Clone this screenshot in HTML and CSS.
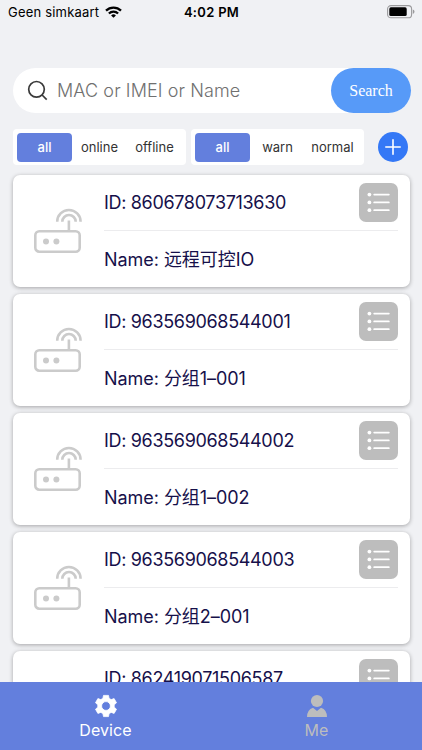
FILE: index.html
```html
<!DOCTYPE html>
<html lang="en">
<head>
    <meta charset="UTF-8">
    <meta name="viewport" content="width=device-width, initial-scale=1.0">
    <title>Device</title>
    <link rel="stylesheet" href="styles.css">
</head>
<body>
    <!-- shared icons -->
    <svg class="icon-defs" width="0" height="0">
        <symbol id="icon-router" viewBox="0 0 50 48">
            <g fill="none" stroke="#cbcbcb" stroke-width="2.6">
                <rect x="2.3" y="24.3" width="44.4" height="20.4" rx="4"/>
                <path d="M35.9 24V13.5"/>
                <path d="M29.3 14.7a6.7 6.7 0 0 1 13.4 0"/>
                <path d="M24.2 14.7a11.7 11.7 0 0 1 23.4 0"/>
            </g>
            <circle cx="13" cy="34.6" r="3" fill="#cbcbcb"/>
            <circle cx="23.4" cy="34.6" r="3" fill="#cbcbcb"/>
        </symbol>
        <symbol id="icon-list" viewBox="0 0 24 24">
            <g fill="#fff">
                <circle cx="2.4" cy="3.6" r="1.9"/>
                <circle cx="2.4" cy="11.4" r="1.9"/>
                <circle cx="2.4" cy="19.2" r="1.9"/>
            </g>
            <path d="M7.2 3.6h14.6M7.2 11.4h14.6M7.2 19.2h14.6" stroke="#fff" stroke-width="1.8" stroke-linecap="round"/>
        </symbol>
    </svg>

    <div class="app">
        <!-- status bar -->
        <div class="status-bar">
            <div class="carrier">
                <span>Geen simkaart</span>
                <svg class="wifi" viewBox="0 0 17 12">
                    <g fill="none" stroke="#000" stroke-width="2.3">
                        <path d="M1 4.6a10.7 10.7 0 0 1 15 0"/>
                        <path d="M3.9 7.5a6.6 6.6 0 0 1 9.2 0"/>
                    </g>
                    <path d="M8.5 11.8L6.1 9.4a3.5 3.5 0 0 1 4.8 0z"/>
                </svg>
            </div>
            <div class="clock">4:02 PM</div>
            <svg class="battery" viewBox="0 0 28 14">
                <rect x="0.6" y="0.6" width="24" height="12.2" rx="3.4" fill="none" stroke="#9a9a9c" stroke-width="1.1"/>
                <rect x="2.3" y="2.3" width="17.4" height="8.8" rx="1.6"/>
                <path d="M25.8 4.5q1.7.6 1.7 2.2t-1.7 2.2z" fill="#9a9a9c"/>
            </svg>
        </div>

        <!-- search -->
        <div class="search-bar">
            <svg class="search-icon" viewBox="0 0 22 22" fill="none" stroke="#3a3a3a" stroke-width="1.7">
                <circle cx="9.5" cy="9.3" r="7.8"/>
                <path d="M15.1 15l4.6 4.6"/>
            </svg>
            <span class="search-hint">MAC or IMEI or Name</span>
            <button class="search-btn">Search</button>
        </div>

        <!-- filters -->
        <div class="filters">
            <div class="segment">
                <span class="seg active">all</span>
                <span class="seg">online</span>
                <span class="seg">offline</span>
            </div>
            <div class="segment">
                <span class="seg active">all</span>
                <span class="seg">warn</span>
                <span class="seg">normal</span>
            </div>
            <button class="add-btn">
                <svg viewBox="0 0 30 30"><path d="M15 7.8v14.4M7.8 15h14.4" stroke="#fff" stroke-width="1.6" stroke-linecap="round"/></svg>
            </button>
        </div>

        <!-- device list -->
        <div class="device-list">
            <div class="card">
                <svg class="router"><use href="#icon-router"/></svg>
                <div class="info">
                    <div class="row"><span class="id">ID: 860678073713630</span><button class="menu-btn"><svg><use href="#icon-list"/></svg></button></div>
                    <div class="row"><span class="name">Name: 远程可控IO</span></div>
                </div>
            </div>
            <div class="card">
                <svg class="router"><use href="#icon-router"/></svg>
                <div class="info">
                    <div class="row"><span class="id">ID: 963569068544001</span><button class="menu-btn"><svg><use href="#icon-list"/></svg></button></div>
                    <div class="row"><span class="name">Name: 分组1–001</span></div>
                </div>
            </div>
            <div class="card">
                <svg class="router"><use href="#icon-router"/></svg>
                <div class="info">
                    <div class="row"><span class="id">ID: 963569068544002</span><button class="menu-btn"><svg><use href="#icon-list"/></svg></button></div>
                    <div class="row"><span class="name">Name: 分组1–002</span></div>
                </div>
            </div>
            <div class="card">
                <svg class="router"><use href="#icon-router"/></svg>
                <div class="info">
                    <div class="row"><span class="id">ID: 963569068544003</span><button class="menu-btn"><svg><use href="#icon-list"/></svg></button></div>
                    <div class="row"><span class="name">Name: 分组2–001</span></div>
                </div>
            </div>
            <div class="card">
                <svg class="router"></svg>
                <div class="info">
                    <div class="row"><span class="id">ID: 862419071506587</span><button class="menu-btn"><svg><use href="#icon-list"/></svg></button></div>
                    <div class="row"></div>
                </div>
            </div>
        </div>

        <!-- tab bar -->
        <div class="tab-bar">
            <a class="tab active">
                <svg viewBox="0 0 24 24" fill="currentColor">
                    <path fill-rule="evenodd" stroke="currentColor" stroke-width="0.8" stroke-linejoin="round" d="M9.5 1.4h5l.6 3 2.1 1.2 2.9-1 2.4 4.2-2.3 2v2.4l2.3 2-2.4 4.2-2.9-1-2.1 1.2-.6 3h-5l-.6-3-2.1-1.2-2.9 1-2.4-4.2 2.3-2v-2.4l-2.3-2 2.4-4.2 2.9 1 2.1-1.2zM12 7.6a4.4 4.4 0 1 0 0 8.8 4.4 4.4 0 0 0 0-8.8z"/>
                </svg>
                <span>Device</span>
            </a>
            <a class="tab">
                <svg viewBox="0 0 24 24" fill="currentColor">
                    <circle cx="12" cy="7" r="6.1"/>
                    <path d="M2 23q0-7.2 6-9.3l4 3.3 4-3.3q6 2.1 6 9.3z"/>
                </svg>
                <span>Me</span>
            </a>
        </div>
    </div>
</body>
</html>
```
FILE: styles.css
```css
* {
    margin: 0;
    padding: 0;
    box-sizing: border-box;
}

body {
    font-family: Inter, "Noto Sans CJK SC", sans-serif;
    background: #f0f1f4;
    color: #16104a;
}

button {
    border: none;
}

svg {
    display: block;
    flex-shrink: 0;
}

.icon-defs {
    display: none;
}

.app {
    height: 100vh;
    display: flex;
    flex-direction: column;
    overflow: hidden;
}

/* status bar */
.status-bar {
    height: 24px;
    display: grid;
    grid-template-columns: 1fr auto 1fr;
    align-items: center;
    padding: 0 7px 0 8px;
    color: #000;
    font-size: 13px;
}

.carrier {
    display: flex;
    align-items: center;
    gap: 6px;
    letter-spacing: 0.2px;
}

.wifi {
    width: 17px;
    height: 12px;
}

.clock {
    font-weight: 600;
    letter-spacing: 0.3px;
}

.battery {
    width: 28px;
    height: 14px;
    justify-self: end;
}

/* search */
.search-bar {
    height: 45px;
    margin: 44px 11px 0 13px;
    display: flex;
    align-items: center;
    flex-shrink: 0;
    padding-left: 14px;
    background: #fff;
    border-radius: 23px;
}

.search-icon {
    width: 22px;
    height: 22px;
}

.search-hint {
    flex: 1;
    margin-left: 8px;
    padding-bottom: 1px;
    font-size: 18px;
    font-weight: 300;
    letter-spacing: 0.1px;
    color: #707070;
    white-space: nowrap;
}

.search-btn {
    width: 80px;
    height: 45px;
    border-radius: 23px;
    background: #579af8;
    color: #fff;
    font-family: "Liberation Serif", serif;
    font-size: 16px;
}

/* filters */
.filters {
    display: flex;
    align-items: center;
    gap: 5px;
    flex-shrink: 0;
    height: 36px;
    margin: 16px 14px 0 13px;
}

.segment {
    display: flex;
    align-items: center;
    width: 173px;
    height: 36px;
    padding: 0 4px;
    background: #fff;
    border-radius: 4px;
}

.seg {
    flex: 1;
    line-height: 29px;
    text-align: center;
    font-size: 13px;
    color: #333;
    border-radius: 4px;
}

.seg.active {
    background: #637fdd;
    color: #fff;
    font-weight: 500;
}

.add-btn {
    width: 30px;
    height: 30px;
    margin-left: auto;
    border-radius: 50%;
    background: #3478f6;
}

/* device list */
.device-list {
    flex: 1;
    min-height: 0;
    display: flex;
    flex-direction: column;
    gap: 7px;
    padding: 10px 12px 0 13px;
    overflow: hidden;
}

.card {
    height: 112px;
    flex-shrink: 0;
    display: flex;
    padding: 0 12px 0 20px;
    background: #fff;
    border-radius: 7px;
    box-shadow: 0 1px 4px rgba(0, 0, 0, 0.32);
}

.router {
    width: 50px;
    height: 48px;
    margin-top: 32px;
}

.info {
    flex: 1;
    margin-left: 21px;
}

.row {
    height: 56px;
    display: flex;
    align-items: center;
    justify-content: space-between;
    font-size: 18px;
    white-space: nowrap;
}

.row:first-child {
    border-bottom: 1px solid #ececee;
}

.id {
    letter-spacing: -0.33px;
}

.name {
    padding-bottom: 3px;
    letter-spacing: -0.05px;
}

.menu-btn {
    width: 39px;
    height: 39px;
    display: flex;
    align-items: center;
    justify-content: center;
    border-radius: 7px;
    background: #bdbdbd;
}

.menu-btn svg {
    width: 24px;
    height: 24px;
}

/* tab bar */
.tab-bar {
    display: flex;
    flex-shrink: 0;
    height: 68px;
    background: #637fdd;
}

.tab {
    flex: 1;
    display: flex;
    flex-direction: column;
    align-items: center;
    padding-top: 12px;
    font-size: 16px;
    line-height: 24px;
    letter-spacing: 0.1px;
    color: #bdbdbd;
}

.tab.active {
    color: #fff;
}

.tab svg {
    width: 24px;
    height: 24px;
}
```
